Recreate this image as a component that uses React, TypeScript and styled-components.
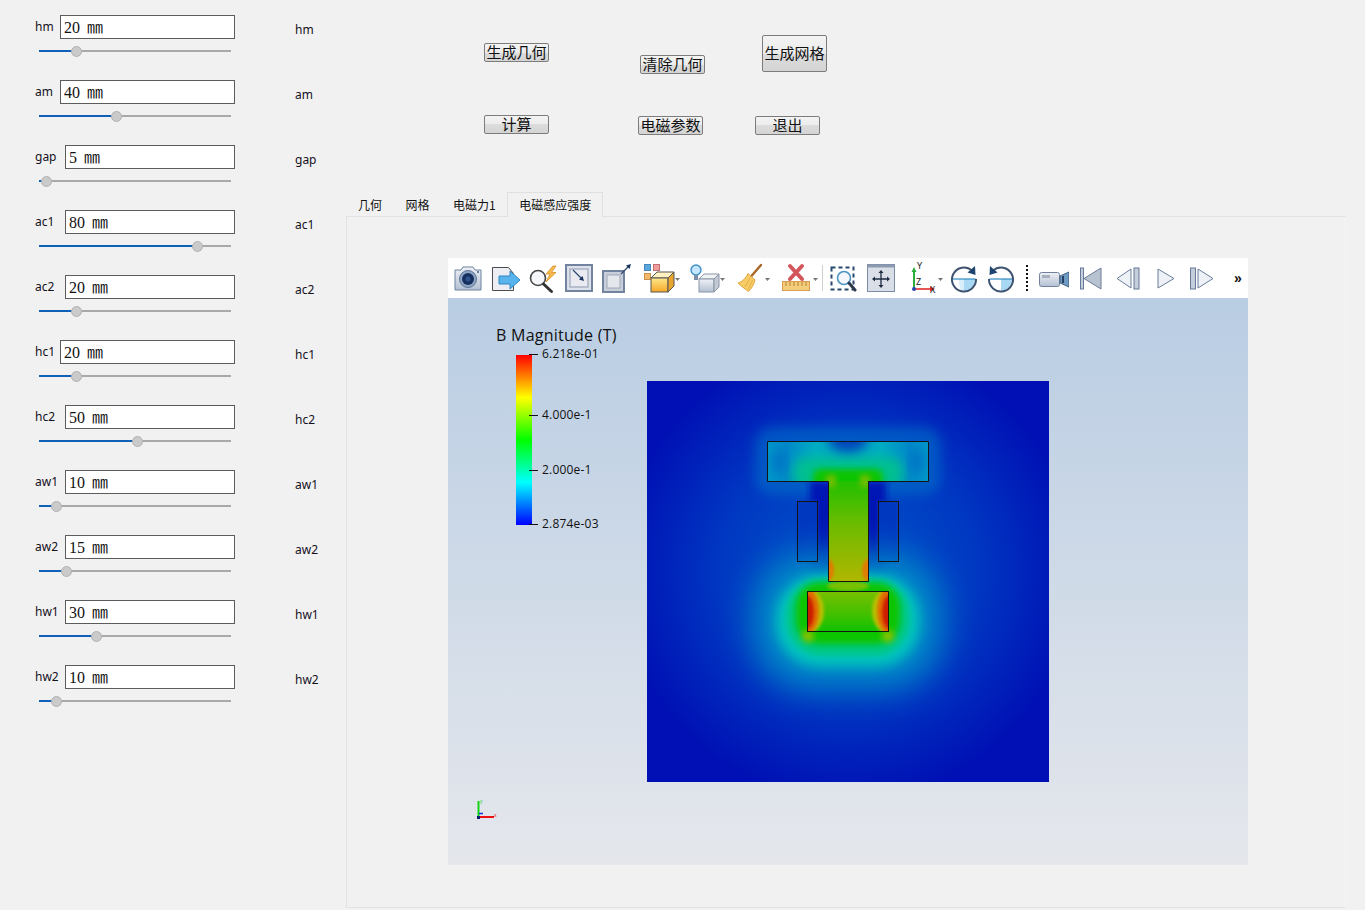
import React from 'react';
import styled, { createGlobalStyle } from 'styled-components';

const params = [
  { name: 'hm', value: 20, labelWidth: 25 },
  { name: 'am', value: 40, labelWidth: 25 },
  { name: 'gap', value: 5, labelWidth: 30 },
  { name: 'ac1', value: 80, labelWidth: 30 },
  { name: 'ac2', value: 20, labelWidth: 30 },
  { name: 'hc1', value: 20, labelWidth: 25 },
  { name: 'hc2', value: 50, labelWidth: 30 },
  { name: 'aw1', value: 10, labelWidth: 30 },
  { name: 'aw2', value: 15, labelWidth: 30 },
  { name: 'hw1', value: 30, labelWidth: 30 },
  { name: 'hw2', value: 10, labelWidth: 30 },
];

const tabs = ['几何', '网格', '电磁力1', '电磁感应强度'];

const sliderOffset = (value: number) => Math.round(value * 2.0125 - 0.1);

const Tool = ({ w, gap, children }: { w: number; gap: number; children: React.ReactNode }) => (
  <ToolSvg $gap={gap} width={w} height={40} viewBox={`0 0 ${w} 40`}>
    {children}
  </ToolSvg>
);

const Caret = ({ x }: { x: number }) => <path d={`M${x} 20h5l-2.5 3z`} fill="#777" />;

const Toolbar = () => (
  <ToolRow>
    <Tool w={28} gap={0}>
      <defs>
        <linearGradient id="steel" x1="0" y1="0" x2="0" y2="1">
          <stop offset="0" stopColor="#eef1f6" />
          <stop offset="1" stopColor="#b4c0d2" />
        </linearGradient>
        <linearGradient id="amber" x1="0" y1="0" x2="0" y2="1">
          <stop offset="0" stopColor="#ffe88a" />
          <stop offset="1" stopColor="#f8a828" />
        </linearGradient>
      </defs>
      <path d="M1 12h6l2-3h10l2 3h6v20H1z" fill="url(#steel)" stroke="#6d82a0" strokeLinejoin="round" />
      <circle cx="14" cy="21" r="8.5" fill="#8fa6c4" stroke="#5d7696" />
      <circle cx="14" cy="21" r="6" fill="#16305e" />
      <circle cx="14" cy="21" r="2.5" fill="#2f5590" />
      <circle cx="24" cy="14" r="1" fill="#42587a" />
    </Tool>
    <Tool w={28} gap={10}>
      <path d="M.5 9.500h16l5 6v17H.5z" fill="#eceef3" stroke="#4c4c4c" />
      <path d="M7 18h11v-5l10 9-10 9v-5H7z" fill="#5ab4ec" stroke="#2f86c6" />
    </Tool>
    <Tool w={29} gap={8}>
      <circle cx="10" cy="20" r="7.500" fill="#f4f6fa" stroke="#454545" strokeWidth="1.600" />
      <path d="M15.500 26l8 7.500" stroke="#333" strokeWidth="3" strokeLinecap="round" />
      <path d="M25 8l-7 8h4l-4 8 10-9.500h-4.500L28 8z" fill="#f4bc50" stroke="#d98c22" strokeWidth=".8" />
    </Tool>
    <Tool w={28} gap={8}>
      <rect x="1" y="7" width="26" height="26" fill="#dde1e9" stroke="#71839f" strokeWidth="2" />
      <rect x="5" y="11" width="18" height="18" fill="#e9ebf0" stroke="#a9b3c3" strokeWidth="1.500" />
      <path d="M8 12l9 9" stroke="#2f4a72" strokeWidth="1.200" />
      <path d="M19 23l-5-1.500 3.500-3.500z" fill="#17335e" />
    </Tool>
    <Tool w={29} gap={9}>
      <rect x="1" y="13" width="21" height="21" fill="#c9cfd9" stroke="#71839f" strokeWidth="2" />
      <rect x="5" y="17" width="13" height="13" fill="#e4e7ec" stroke="#9fa9b9" />
      <path d="M19 16l7-7" stroke="#33486a" strokeWidth="1.200" />
      <path d="M29 6l-5 1.500 3.500 3.500z" fill="#17335e" />
    </Tool>
    <Tool w={36} gap={13}>
      <rect x=".5" y="6.500" width="6" height="6" fill="#58a8e0" stroke="#4a86b8" />
      <rect x="9.500" y="6.500" width="6" height="6" fill="#ee9c9c" stroke="#c07070" />
      <rect x=".5" y="15.500" width="6" height="6" fill="#f4b868" stroke="#c8924a" />
      <path d="M7 20l6-6h17l-6 6z" fill="#fff2c0" stroke="#555" />
      <rect x="7" y="20" width="17" height="14" fill="url(#amber)" stroke="#555" />
      <path d="M24 20l6-6v14l-6 6z" fill="#e8a530" stroke="#555" />
      <Caret x={31} />
    </Tool>
    <Tool w={36} gap={10}>
      <circle cx="6" cy="12" r="5" fill="#c4e6fc" stroke="#3d8fc6" strokeWidth="1.400" />
      <path d="M4 17h4v5H4z" fill="#7c8ea8" />
      <path d="M9 21l5-5h15l-5 5z" fill="#f1f3f6" stroke="#8b96a6" />
      <rect x="9" y="21" width="15" height="13" fill="url(#steel)" stroke="#8b96a6" />
      <path d="M24 21l5-5v13l-5 5z" fill="#c3cad5" stroke="#8b96a6" />
      <Caret x={30} />
    </Tool>
    <Tool w={34} gap={11}>
      <path d="M24 7L14 18.500" stroke="#a8672a" strokeWidth="2.400" strokeLinecap="round" />
      <path d="M11 15.500L18 22c-1 5-4 9-6.500 11.500C8 31 4 28 1 25c4-1 8-5 10-9.500z" fill="#f8cc64" stroke="#dfa440" />
      <path d="M13 20l-5 9M15.500 22l-4 9" stroke="#e0a848" strokeWidth=".8" />
      <Caret x={28} />
    </Tool>
    <Tool w={36} gap={11}>
      <rect x=".5" y="23.500" width="27" height="9" fill="#f4cd7c" stroke="#dc9a52" />
      <path d="M4 24v4M8 24v4M12 24v4M16 24v4M20 24v4M24 24v4" stroke="#b5802c" />
      <path d="M8 8l12 13M20 8L8 21" stroke="#d2565a" strokeWidth="4" strokeLinecap="round" />
      <Caret x={31} />
    </Tool>
    <ThinSeparator />
    <Tool w={27} gap={7}>
      <rect x="1.500" y="9.500" width="22" height="22" fill="none" stroke="#27486f" strokeWidth="2" strokeDasharray="4 3" />
      <circle cx="14" cy="20" r="6.500" fill="#f4f8fc" stroke="#4c94c4" strokeWidth="1.600" />
      <path d="M19 25l6 7" stroke="#2e3b4e" strokeWidth="3" strokeLinecap="round" />
    </Tool>
    <Tool w={28} gap={10}>
      <rect x=".5" y="6.500" width="27" height="27" fill="#dadee6" stroke="#7a8ca6" />
      <rect x=".5" y="6.500" width="27" height="3" fill="#8b9ab0" />
      <path d="M14 14v14M7 21h14" stroke="#1d2c42" strokeWidth="1.300" />
      <path d="M14 12l2.500 3h-5zM14 30l2.500-3h-5zM5 21l3-2.500v5zM23 21l-3-2.500v5z" fill="#1d2c42" />
    </Tool>
    <Tool w={35} gap={15}>
      <path d="M4 13v18" stroke="#2cae3c" strokeWidth="2" />
      <path d="M4 9l2.500 5h-5z" fill="#2cae3c" />
      <path d="M4 31h17" stroke="#e02a2a" strokeWidth="1.600" />
      <path d="M25 31l-5 2.500v-5z" fill="#e02a2a" />
      <circle cx="4" cy="31" r="2" fill="#2a46b0" />
      <AxisLetter x="7" y="11">Y</AxisLetter>
      <AxisLetter x="6" y="27">Z</AxisLetter>
      <AxisLetter x="20" y="35">X</AxisLetter>
      <Caret x={28} />
    </Tool>
    <Tool w={26} gap={6}>
      <path d="M13 21h11c0 6.500-5 12-11 12z" fill="#a8d8f4" />
      <path d="M8 21h5v12c-3 0-5-1-5-12z" fill="#d8eefa" />
      <path d="M1.500 21h23" stroke="#3f93c8" strokeWidth="1.300" />
      <path d="M21 12.500A12 12 0 1 0 25 21" fill="none" stroke="#3e5371" strokeWidth="2" />
      <path d="M24 8l.5 9-8-2.500z" fill="#1e4470" />
    </Tool>
    <Tool w={26} gap={11}>
      <path d="M13 21h11c0 6-5 12-11 12z" fill="#a8d8f4" />
      <path d="M1.500 21h23" stroke="#3f93c8" strokeWidth="1.300" />
      <path d="M5 12.500A12 12 0 1 1 1 21" fill="none" stroke="#3e5371" strokeWidth="2" />
      <path d="M2 8l-.5 9 8-2.500z" fill="#1e4470" />
    </Tool>
    <DottedSeparator />
    <Tool w={30} gap={11}>
      <rect x=".5" y="14.500" width="20" height="14" rx="2" fill="url(#steel)" stroke="#72829a" />
      <rect x="3" y="17" width="8" height="3" fill="#a7b0be" />
      <path d="M21 18l9-4v15l-9-4z" fill="#6f9ac4" stroke="#41607f" />
      <path d="M24 18v7" stroke="#27405e" strokeWidth="2" />
    </Tool>
    <Tool w={22} gap={11}>
      <rect x=".5" y="10" width="3" height="21" fill="#c5cedb" stroke="#66799a" />
      <path d="M4 20.500L21 10v21z" fill="#b8c3d2" stroke="#6a7d99" />
    </Tool>
    <Tool w={24} gap={14}>
      <path d="M1 20.500L15 11v19z" fill="#eef1f6" stroke="#6a7d99" />
      <rect x="18" y="10" width="5" height="21" fill="#c5cedb" stroke="#66799a" />
    </Tool>
    <Tool w={18} gap={17}>
      <path d="M1 11l16 9.500L1 30z" fill="#eef1f6" stroke="#6a7d99" />
    </Tool>
    <Tool w={24} gap={15}>
      <rect x=".5" y="10" width="5" height="21" fill="#c5cedb" stroke="#66799a" />
      <path d="M8 11l15 9.500L8 30z" fill="#eef1f6" stroke="#6a7d99" />
    </Tool>
    <MoreGlyph>»</MoreGlyph>
  </ToolRow>
);

const FieldPlot = () => (
  <PlotSvg width={402} height={401} viewBox="0 0 402 401">
    <defs>
      <radialGradient id="fieldHaze" gradientUnits="userSpaceOnUse" cx="201" cy="190" r="230">
        <stop offset="0" stopColor="#0058c8" />
        <stop offset=".55" stopColor="#0038c2" />
        <stop offset="1" stopColor="#0010b4" />
      </radialGradient>
      <linearGradient id="stemFill" x1="0" y1="0" x2="0" y2="1">
        <stop offset="0" stopColor="#20c000" />
        <stop offset=".4" stopColor="#68bc00" />
        <stop offset="1" stopColor="#b0b600" />
      </linearGradient>
      <linearGradient id="barFill" x1="0" y1="0" x2="1" y2="0">
        <stop offset="0" stopColor="#0098c8" />
        <stop offset=".12" stopColor="#0088c8" />
        <stop offset=".3" stopColor="#00acc4" />
        <stop offset=".5" stopColor="#00b0c4" />
        <stop offset=".7" stopColor="#00acc4" />
        <stop offset=".88" stopColor="#0088c8" />
        <stop offset="1" stopColor="#0098c8" />
      </linearGradient>
      <linearGradient id="blockFill" x1="0" y1="0" x2="0" y2="1">
        <stop offset="0" stopColor="#78c000" />
        <stop offset=".6" stopColor="#40c000" />
        <stop offset="1" stopColor="#10c200" />
      </linearGradient>
      <filter id="blurWide" x="-40%" y="-40%" width="180%" height="180%"><feGaussianBlur stdDeviation="16" /></filter>
      <filter id="blurMid" x="-40%" y="-40%" width="180%" height="180%"><feGaussianBlur stdDeviation="6" /></filter>
      <filter id="blurSoft" x="-40%" y="-40%" width="180%" height="180%"><feGaussianBlur stdDeviation="3" /></filter>
      <filter id="blurFine" x="-40%" y="-40%" width="180%" height="180%"><feGaussianBlur stdDeviation="1.500" /></filter>
      <clipPath id="barClip"><rect x="120" y="60" width="162" height="40" /></clipPath>
      <clipPath id="stemClip"><rect x="181" y="100" width="40" height="100" /></clipPath>
      <clipPath id="blockClip"><rect x="160" y="210" width="82" height="40" /></clipPath>
    </defs>
    <rect width="402" height="401" fill="url(#fieldHaze)" />
    <rect x="108" y="46" width="186" height="68" rx="18" fill="#0070c8" opacity=".6" filter="url(#blurMid)" />
    <rect x="163" y="100" width="76" height="96" fill="#0018b4" filter="url(#blurSoft)" />
    <rect x="150" y="120" width="21" height="60" fill="#0038c0" filter="url(#blurFine)" />
    <rect x="231" y="120" width="21" height="60" fill="#0038c0" filter="url(#blurFine)" />

    <rect x="106" y="172" width="190" height="136" rx="58" fill="#0088c8" filter="url(#blurWide)" />
    <rect x="129" y="194" width="144" height="92" rx="44" fill="#00c4bc" filter="url(#blurMid)" />
    <rect x="140" y="198" width="122" height="76" rx="34" fill="#00c880" filter="url(#blurSoft)" />
    <rect x="149" y="202" width="104" height="61" rx="24" fill="#08c400" filter="url(#blurSoft)" />
    <circle cx="161" cy="255" r="6" fill="#90c000" filter="url(#blurSoft)" />
    <circle cx="241" cy="255" r="6" fill="#90c000" filter="url(#blurSoft)" />

    <rect x="160" y="210" width="82" height="40" fill="url(#blockFill)" />
    <g clipPath="url(#blockClip)">
      <ellipse cx="158" cy="230" rx="19" ry="24" fill="#b8c000" filter="url(#blurFine)" />
      <ellipse cx="244" cy="230" rx="19" ry="24" fill="#b8c000" filter="url(#blurFine)" />
      <ellipse cx="158" cy="230" rx="14" ry="24" fill="#e07000" filter="url(#blurFine)" />
      <ellipse cx="244" cy="230" rx="14" ry="24" fill="#e07000" filter="url(#blurFine)" />
      <ellipse cx="159" cy="231" rx="8" ry="17" fill="#cc1c00" filter="url(#blurFine)" />
      <ellipse cx="243" cy="231" rx="8" ry="17" fill="#cc1c00" filter="url(#blurFine)" />
    </g>
    <ellipse cx="201" cy="205" rx="21" ry="5" fill="#78c000" filter="url(#blurFine)" />

    <rect x="120" y="60" width="162" height="40" fill="url(#barFill)" />
    <g clipPath="url(#barClip)">
      <rect x="146" y="76" width="110" height="34" rx="14" fill="#00c090" filter="url(#blurMid)" />
      <rect x="166" y="88" width="70" height="20" rx="8" fill="#10c400" filter="url(#blurSoft)" />
      <ellipse cx="201" cy="59" rx="20" ry="12" fill="#0040bc" filter="url(#blurMid)" />
      <ellipse cx="132" cy="80" rx="6" ry="12" fill="#0060c4" opacity=".7" filter="url(#blurMid)" />
      <ellipse cx="270" cy="80" rx="6" ry="12" fill="#0060c4" opacity=".7" filter="url(#blurMid)" />
    </g>

    <rect x="181" y="100" width="40" height="100" fill="url(#stemFill)" />
    <g clipPath="url(#stemClip)">
      <ellipse cx="181" cy="189" rx="6" ry="11" fill="#e07c00" filter="url(#blurFine)" />
      <ellipse cx="221" cy="189" rx="6" ry="11" fill="#e07c00" filter="url(#blurFine)" />
      <circle cx="184" cy="101" r="5" fill="#8cbc00" filter="url(#blurSoft)" />
      <circle cx="218" cy="101" r="5" fill="#8cbc00" filter="url(#blurSoft)" />
    </g>
    <g clipPath="url(#barClip)">
      <circle cx="184" cy="99" r="5" fill="#8cbc00" filter="url(#blurSoft)" />
      <circle cx="218" cy="99" r="5" fill="#8cbc00" filter="url(#blurSoft)" />
    </g>

    <g fill="none" stroke="#141414" strokeWidth="1">
      <path d="M120.500 60.500h161v40h-60v100h-40v-100h-61z" />
      <rect x="150.500" y="120.500" width="20" height="60" />
      <rect x="231.500" y="120.500" width="20" height="60" />
      <rect x="160.500" y="210.500" width="81" height="40" />
    </g>
  </PlotSvg>
);

const App = () => (
  <>
    <GlobalStyle />
    <Page>
      <ParamPanel>
        {params.map((p) => (
          <ParamRow key={p.name}>
            <ParamBody>
              <InputLine>
                <ParamLabel $width={p.labelWidth}>{p.name}</ParamLabel>
                <ValueBox>{p.value} ㎜</ValueBox>
              </InputLine>
              <SliderTrack>
                <SliderFill style={{ width: sliderOffset(p.value) }} />
                <SliderThumb style={{ left: sliderOffset(p.value) - 8 }} />
              </SliderTrack>
            </ParamBody>
            <EchoLabel>{p.name}</EchoLabel>
          </ParamRow>
        ))}
      </ParamPanel>
      <MainColumn>
        <ButtonRowTop>
          <ActionButton $left={138} $top={43}>生成几何</ActionButton>
          <ActionButton $left={91} $top={55}>清除几何</ActionButton>
          <ActionButton $left={57} $top={35} $tall>生成网格</ActionButton>
        </ButtonRowTop>
        <ButtonRowBottom>
          <ActionButton $left={138} $top={0}>计算</ActionButton>
          <ActionButton $left={89} $top={1}>电磁参数</ActionButton>
          <ActionButton $left={52} $top={1}>退出</ActionButton>
        </ButtonRowBottom>
        <TabBar>
          {tabs.map((t, i) => (
            <Tab key={t} $active={i === tabs.length - 1}>{t}</Tab>
          ))}
        </TabBar>
        <TabPane>
          <Viewer>
            <Toolbar />
            <Viewport>
              <FieldPlot />
              <Legend>
                <LegendTitle>B Magnitude (T)</LegendTitle>
                <ColorBar />
                <Tick $top={0}>6.218e-01</Tick>
                <Tick $top={61}>4.000e-1</Tick>
                <Tick $top={116}>2.000e-1</Tick>
                <Tick $top={170}>2.874e-03</Tick>
              </Legend>
              <Triad width={24} height={24} viewBox="0 0 24 24">
                <path d="M4.500 3v16" stroke="#12d412" strokeWidth="2" />
                <path d="M4 19h16" stroke="#ee1010" strokeWidth="2" />
                <path d="M5 15.500h4" stroke="#1030e0" strokeWidth="1.500" />
                <rect x="3" y="18" width="3" height="3" fill="#0a1a70" />
                <TriadLetter x="6" y="5" fill="#12d412">y</TriadLetter>
                <TriadLetter x="20" y="19" fill="#ee1010">x</TriadLetter>
              </Triad>
            </Viewport>
          </Viewer>
        </TabPane>
      </MainColumn>
    </Page>
  </>
);

export default App;

const GlobalStyle = createGlobalStyle`
  html, body {
    margin: 0;
    padding: 0;
    background: #f1f1f1;
    overflow: hidden;
  }
`;

const Page = styled.div`
  width: 1365px;
  height: 910px;
  display: flex;
  background: #f1f1f1;
`;

const ParamPanel = styled.div`
  width: 346px;
  padding: 15px 0 0 35px;
  box-sizing: border-box;
`;

const ParamRow = styled.div`
  height: 65px;
  display: flex;
`;

const ParamBody = styled.div`
  width: 200px;
`;

const InputLine = styled.div`
  display: flex;
  height: 24px;
`;

const ParamLabel = styled.span<{ $width: number }>`
  width: ${(p) => p.$width}px;
  flex: none;
  height: 22px;
  padding-top: 1px;
  font: 12px/22px 'Noto Sans', sans-serif;
  color: #14101c;
`;

const ValueBox = styled.div`
  flex: 1;
  box-sizing: border-box;
  border: 1px solid #5c5c5c;
  background: #fff;
  padding: 0 0 0 3px;
  font: 16px/23px 'Liberation Serif', 'Noto Sans CJK SC', serif;
  word-spacing: 3px;
  color: #111;
`;

const SliderTrack = styled.div`
  position: relative;
  width: 192px;
  height: 2px;
  margin: 11px 0 0 4px;
  background: #a9a9a9;
`;

const SliderFill = styled.div`
  height: 2px;
  background: #0f62b8;
`;

const SliderThumb = styled.div`
  position: absolute;
  top: -4px;
  width: 11px;
  height: 11px;
  box-sizing: border-box;
  border-radius: 50%;
  border: 1px solid #b2b2b2;
  background: #cacaca;
`;

const EchoLabel = styled.span`
  margin: 4px 0 0 60px;
  height: 22px;
  font: 12px/22px 'Noto Sans', sans-serif;
  color: #14101c;
`;

const MainColumn = styled.div`
  width: 1000px;
  display: flex;
  flex-direction: column;
`;

const ButtonRowTop = styled.div`
  height: 115px;
  display: flex;
  align-items: flex-start;
`;

const ButtonRowBottom = styled.div`
  height: 77px;
  display: flex;
  align-items: flex-start;
`;

const ActionButton = styled.button<{ $left: number; $top: number; $tall?: boolean }>`
  width: 65px;
  height: ${(p) => (p.$tall ? 37 : 19)}px;
  margin: ${(p) => p.$top}px 0 0 ${(p) => p.$left}px;
  padding: 0 0 2px;
  flex: none;
  border: 1px solid #7c7c7c;
  border-radius: 2px;
  background: linear-gradient(#f3f3f3 0%, #ececec 50%, #dcdcdc 50%, #d4d4d4 100%);
  font: 15px/15px 'Noto Sans CJK SC', sans-serif;
  color: #111;
  white-space: nowrap;
`;

const TabBar = styled.div`
  height: 24px;
  display: flex;
  position: relative;
  z-index: 1;
`;

const Tab = styled.div<{ $active: boolean }>`
  box-sizing: border-box;
  height: ${(p) => (p.$active ? 25 : 24)}px;
  padding: 4px 11.500px 0 12px;
  font: 12px/18px 'Noto Sans CJK SC', sans-serif;
  color: #111;
  ${(p) => p.$active && 'border: 1px solid #e0e0e0; border-bottom: none; background: #f1f1f1; padding: 3px 11px 0;'}
`;

const TabPane = styled.div`
  width: 1000px;
  height: 692px;
  box-sizing: border-box;
  border: 1px solid #e2e2e2;
  border-right-color: #f4f4f4;
  padding: 41px 0 0 101px;
`;

const Viewer = styled.div`
  width: 800px;
`;

const ToolRow = styled.div`
  height: 40px;
  padding-left: 6px;
  background: #fff;
  display: flex;
  align-items: center;
`;

const ToolSvg = styled.svg<{ $gap: number }>`
  flex: none;
  margin-left: ${(p) => p.$gap}px;
`;

const AxisLetter = styled.text`
  font: 9px 'Noto Sans', sans-serif;
  fill: #222;
`;

const ThinSeparator = styled.div`
  width: 1px;
  height: 26px;
  margin-left: 4px;
  background: #cfcfcf;
`;

const DottedSeparator = styled.div`
  width: 0;
  height: 26px;
  margin-left: 12px;
  border-left: 2px dotted #111;
`;

const MoreGlyph = styled.span`
  margin-left: 20px;
  font: bold 14px/16px 'Liberation Sans', sans-serif;
  color: #111;
`;

const Viewport = styled.div`
  position: relative;
  height: 567px;
  box-sizing: border-box;
  padding: 83px 0 0 199px;
  background: linear-gradient(#b9cde3, #e5e7ec);
`;

const PlotSvg = styled.svg`
  display: block;
`;

const Legend = styled.div`
  position: absolute;
  left: 48px;
  top: 27px;
  width: 150px;
  height: 210px;
  color: #111;
`;

const LegendTitle = styled.div`
  font: 16px/20px 'Open Sans', sans-serif;
  white-space: nowrap;
  letter-spacing: 0.25px;
`;

const ColorBar = styled.div`
  position: absolute;
  left: 20px;
  top: 30px;
  width: 16px;
  height: 170px;
  background: linear-gradient(#ff0000 0%, #ffff00 25%, #00ff00 50%, #00ffff 75%, #0000ff 100%);
`;

const Tick = styled.div<{ $top: number }>`
  position: absolute;
  left: 33px;
  top: ${(p) => p.$top + 21}px;
  font: 12px/16px 'Open Sans', sans-serif;
  white-space: nowrap;
  letter-spacing: 0.2px;
  padding-left: 13px;
  &::before {
    content: '';
    position: absolute;
    left: 0;
    top: 8px;
    width: 9px;
    height: 1px;
    background: #111;
  }
`;

const Triad = styled.svg`
  position: absolute;
  left: 26px;
  top: 500px;
`;

const TriadLetter = styled.text`
  font: 5px 'Liberation Sans', sans-serif;
`;
